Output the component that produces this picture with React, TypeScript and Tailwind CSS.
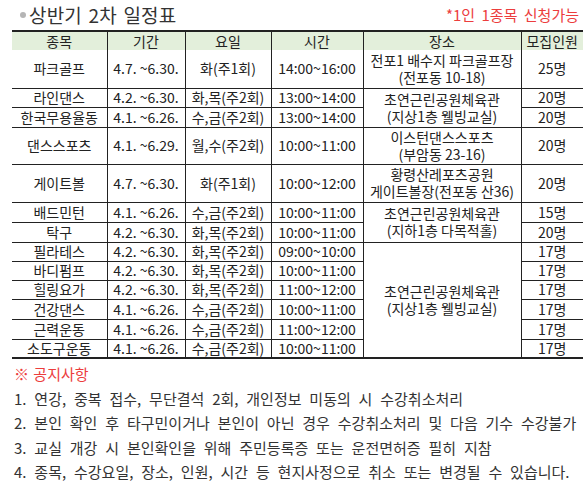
const rows: {
  name: string;
  period: string;
  day: string;
  time: string;
  place?: string[];
  span?: number;
  cap: string;
  h: string;
}[] = [
  { name: "파크골프", period: "4.7. ~6.30.", day: "화(주1회)", time: "14:00~16:00", place: ["전포1 배수지 파크골프장", "(전포동 10-18)"], span: 1, cap: "25명", h: "h-[38px]" },
  { name: "라인댄스", period: "4.2. ~6.30.", day: "화,목(주2회)", time: "13:00~14:00", place: ["초연근린공원체육관", "(지상1층 웰빙교실)"], span: 2, cap: "20명", h: "h-[19px]" },
  { name: "한국무용율동", period: "4.1. ~6.26.", day: "수,금(주2회)", time: "13:00~14:00", cap: "20명", h: "h-[20px]" },
  { name: "댄스스포츠", period: "4.1. ~6.29.", day: "월,수(주2회)", time: "10:00~11:00", place: ["이스턴댄스스포츠", "(부암동 23-16)"], span: 1, cap: "20명", h: "h-[37px]" },
  { name: "게이트볼", period: "4.7. ~6.30.", day: "화(주1회)", time: "10:00~12:00", place: ["황령산레포츠공원", "게이트볼장(전포동 산36)"], span: 1, cap: "20명", h: "h-[38px]" },
  { name: "배드민턴", period: "4.1. ~6.26.", day: "수,금(주2회)", time: "10:00~11:00", place: ["초연근린공원체육관", "(지하1층 다목적홀)"], span: 2, cap: "15명", h: "h-[20px]" },
  { name: "탁구", period: "4.2. ~6.30.", day: "화,목(주2회)", time: "10:00~11:00", cap: "20명", h: "h-[20px]" },
  { name: "필라테스", period: "4.2. ~6.30.", day: "화,목(주2회)", time: "09:00~10:00", place: ["초연근린공원체육관", "(지상1층 웰빙교실)"], span: 6, cap: "17명", h: "h-[19px]" },
  { name: "바디펌프", period: "4.2. ~6.30.", day: "화,목(주2회)", time: "10:00~11:00", cap: "17명", h: "h-[19px]" },
  { name: "힐링요가", period: "4.2. ~6.30.", day: "화,목(주2회)", time: "11:00~12:00", cap: "17명", h: "h-[19px]" },
  { name: "건강댄스", period: "4.1. ~6.26.", day: "수,금(주2회)", time: "10:00~11:00", cap: "17명", h: "h-[20px]" },
  { name: "근력운동", period: "4.1. ~6.26.", day: "수,금(주2회)", time: "11:00~12:00", cap: "17명", h: "h-[20px]" },
  { name: "소도구운동", period: "4.1. ~6.26.", day: "수,금(주2회)", time: "10:00~11:00", cap: "17명", h: "h-[19px]" },
];

const headers = ["종목", "기간", "요일", "시간", "장소", "모집인원"];

const notes = [
  "1. 연강, 중복 접수, 무단결석 2회, 개인정보 미동의 시 수강취소처리",
  "2. 본인 확인 후 타구민이거나 본인이 아닌 경우 수강취소처리 및 다음 기수 수강불가",
  "3. 교실 개강 시 본인확인을 위해 주민등록증 또는 운전면허증 필히 지참",
  "4. 종목, 수강요일, 장소, 인원, 시간 등 현지사정으로 취소 또는 변경될 수 있습니다.",
];

export default function App() {
  return (
    <div className="h-[481px] w-[583px] overflow-hidden bg-white font-['Noto_Sans_CJK_KR',sans-serif] text-[#222]">
      <div className="flex h-[30px] items-center justify-between pl-[20px] pr-[4px]">
        <div className="flex items-center gap-[3px]">
          <span className="h-[6px] w-[6px] rounded-full bg-[#b5b5b5]" />
          <span className="text-[19px] leading-[30px] tracking-[0.2px] text-[#333] [word-spacing:2px]">
            상반기 2차 일정표
          </span>
        </div>
        <span className="text-[15px] leading-[30px] text-[#ec3d3d] [word-spacing:3px]">
          *1인 1종목 신청가능
        </span>
      </div>

      <table className="ml-[12px] w-[571px] table-fixed border-collapse text-center text-[14px] leading-[17px]">
        <colgroup>
          <col className="w-[95px]" />
          <col className="w-[78px]" />
          <col className="w-[86px]" />
          <col className="w-[92px]" />
          <col className="w-[158px]" />
          <col className="w-[62px]" />
        </colgroup>
        <thead>
          <tr className="h-[19px] border-t-2 border-[#222] bg-[#e3efdb]">
            {headers.map((h, i) => (
              <th key={h} className={`p-0 font-normal ${i > 0 ? "border-l border-[#222]" : ""}`}>
                {h}
              </th>
            ))}
          </tr>
        </thead>
        <tbody>
          {rows.map((r, idx) => (
            <tr
              key={r.name}
              className={`${r.h} ${idx === rows.length - 1 ? "border-b-2" : "border-b"} border-[#222]`}
            >
              <td className="p-0 whitespace-nowrap">{r.name}</td>
              <td className="border-l border-[#222] p-0 whitespace-nowrap">{r.period}</td>
              <td className="border-l border-[#222] p-0 whitespace-nowrap">{r.day}</td>
              <td className="border-l border-[#222] p-0 whitespace-nowrap">{r.time}</td>
              {r.place && (
                <td
                  rowSpan={r.span}
                  className="border-l border-[#222] p-0 whitespace-nowrap leading-[17px]"
                >
                  {r.place.map((p) => (
                    <div key={p}>{p}</div>
                  ))}
                </td>
              )}
              <td className="border-l border-[#222] p-0 whitespace-nowrap">{r.cap}</td>
            </tr>
          ))}
        </tbody>
      </table>

      <div className="pl-[14px] pt-[3px] text-[15px] leading-[24.5px] text-[#333] [word-spacing:4.5px]">
        <div className="text-[#ec3d3d] [word-spacing:1px]">※ 공지사항</div>
        {notes.map((n) => (
          <div key={n} className="whitespace-nowrap">
            {n}
          </div>
        ))}
      </div>
    </div>
  );
}
